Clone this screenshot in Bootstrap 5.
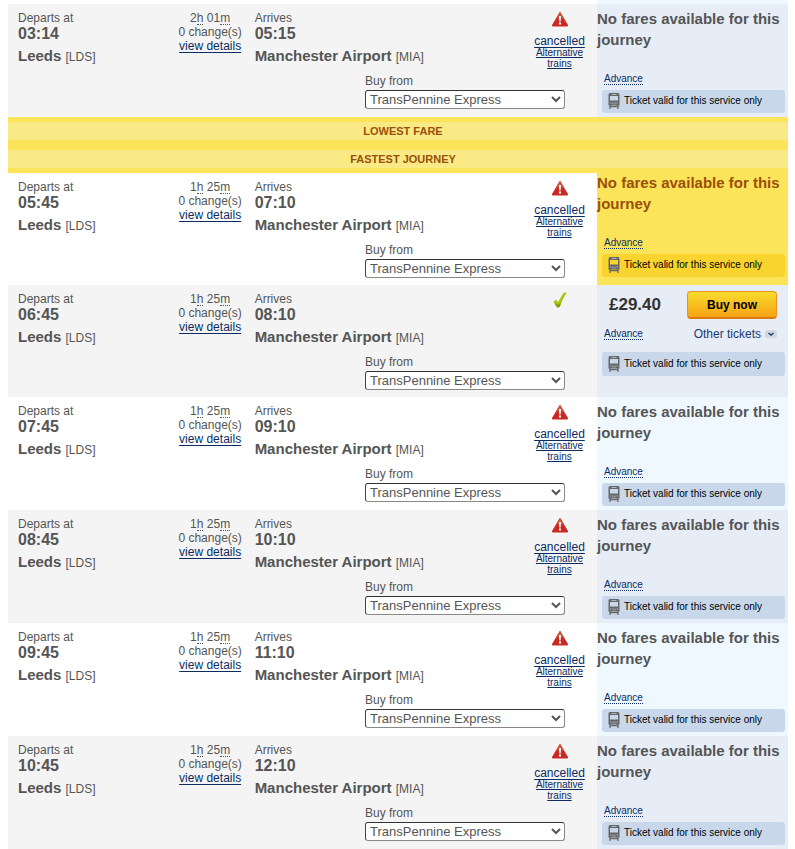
<!DOCTYPE html>
<html lang="en">
<head>
<meta charset="utf-8">
<meta name="viewport" content="width=device-width, initial-scale=1">
<title>Leeds to Manchester Airport</title>
<link href="https://cdn.jsdelivr.net/npm/bootstrap@5.3.0/dist/css/bootstrap.min.css" rel="stylesheet">
<style>
body { font: 12px/14px "Liberation Sans", Arial, sans-serif; color: #555; background: #fff; }
a { color: #0b2c63; text-decoration: underline; text-underline-offset: 2px; }
.results { padding: 0 7px 0 8px; }
.results::before { content: ""; display: block; height: 4px; width: 191px; margin-left: auto; background: #f0f8ff; }
.journey { display: grid; grid-template-columns: minmax(0, 3fr) 75px minmax(0, 5fr) 75px 191px; grid-template-rows: 69px auto; min-height: 113px; }
.journey.compact { min-height: 112px; }
.journey > div { padding-top: 7px; }
.shaded { background: #f4f4f4; }
.time { font-size: 16px; line-height: 18px; }
.station { font-size: 15px; line-height: 18px; margin-top: 4px; white-space: nowrap; }
.station span { font-size: 12px; }
.depart { padding-left: 10px; }
.arrive { padding-left: 7px; }
abbr[title] { text-decoration: none; border-bottom: 1px dotted #555; cursor: help; }
.duration abbr { display: inline-block; line-height: 12px; }
.state a { display: block; }
.state svg { display: block; margin: 0 auto 7px; }
.state .alt { font-size: 10px; line-height: 11px; margin-top: -1px; padding: 0 10px; text-underline-offset: 1px; }
.journey > .retailer { grid-column: 1 / 5; grid-row: 2; padding: 1px 0 0; justify-self: end; width: 200px; margin-right: 32px; }
.retailer label { display: block; line-height: 14px; margin-bottom: 2px; }
.retailer select { display: block; width: 100%; height: 19px; padding: 0; font-size: 13px; line-height: 17px; color: #555; background-color: #fff; border: 1px solid; border-color: #333 #888 #888 #444; border-radius: 3px; }
.journey > .fare { grid-column: 5; grid-row: 1 / 3; padding: 4px 3px 0 0; background: #f0f8ff; }
.shaded > .fare { background: #e6edf6; }
.fare h2 { font-size: 15px; line-height: 21px; font-weight: 700; margin: 0 0 23px; }
.advance { font-size: 10px; line-height: 11px; margin-left: 7px; align-self: start; color: #0b2c63; }
.fare .advance { border-bottom-color: #0b2c63; }
.valid { height: 23px; margin: 5px 0 0 5px; padding: 0 0 1px 6px; border-radius: 3px; background: #c8d8ea; color: #000; font-size: 10px; white-space: nowrap; gap: 4px; }
.journey.featured > .fare { background: #fbe45a; margin-top: -1px; padding-top: 0; color: #9c4f08; }
.featured .valid { background: #f9d42f; }
.banner { background: #fbe45a; padding: 5px 0; }
.banner span { display: block; background: #faea86; color: #9c4f08; font-size: 11px; line-height: 18px; font-weight: 700; padding-right: 10px; }
.banner span { padding: 0 0 0 10px; }
.price { font-size: 17px; line-height: 20px; color: #333; }
.buy { width: 90px; height: 28px; font-size: 12px; line-height: 14px; font-weight: 700; color: #000; border: 1px solid #e8941c; border-bottom: 2px solid #dc7a0e; border-radius: 4px; padding: 0; background: linear-gradient(#f8dc2c, #f6a214); }
.buy:hover { color: #000; background: #f8c420; }
.journey.bookable > .fare { padding-top: 6px; }
.bookable .valid { height: 24px; margin-top: 11px; }
.other { color: #1b3a72; text-decoration: none; gap: 4px; }
</style>
</head>
<body>
<svg class="d-none" aria-hidden="true">
  <symbol id="warn" viewBox="0 0 18 16"><path d="M9 .7 17 14q.4 1.4-.9 1.4H1.900Q.6 15.400 1 14Z" fill="#c92a24"/><path d="M9 .7 13 7.500H5Z" fill="#c95436"/><path d="M8 5h2l-.3 5.500H8.300Z" fill="#fff"/><rect x="8" y="11.500" width="2" height="2" fill="#fff"/></symbol>
  <symbol id="tick" viewBox="0 0 14 17"><path d="m.3 9.500 3-1.800 1.900 2.200Q8 4.500 10.800.8l3-.3Q9.200 7 7 14.500l-2.600 1.200Z" fill="#a4c814"/><path d="m1.200 11 3.600 1.800L7.500 11 7 14.500l-2.600 1.200Z" fill="#7d9f0b"/></symbol>
  <symbol id="train" viewBox="0 0 12 16"><path fill-rule="evenodd" d="M2 0h8q1.500 0 1.500 2v10.500H.5V2Q.5 0 2 0ZM2 3v4.500h8V3Z" fill="#666"/><path d="M3.500 1.500h5M2 10h1.500M8.500 10H10M5 9.500v2M7 9.500v2" stroke="#aab6c4" fill="none"/><path d="M2 12v4M10 12v4M2 13.700h8" stroke="#666" stroke-width="1.300" fill="none"/></symbol>
</svg>
<main class="results">

  <section class="journey shaded">
    <div class="depart">Departs at<div class="time fw-bold">03:14</div><div class="station"><b>Leeds</b> <span>[LDS]</span></div></div>
    <div class="duration text-center text-nowrap">2<abbr title="hours">h</abbr> 01<abbr title="minutes">m</abbr><br>0 change(s)<br><a href="#">view details</a></div>
    <div class="arrive">Arrives<div class="time fw-bold">05:15</div><div class="station"><b>Manchester Airport</b> <span>[MIA]</span></div></div>
    <div class="state text-center"><svg width="18" height="16"><use href="#warn"/></svg><a href="#">cancelled</a><a class="alt" href="#">Alternative trains</a></div>
    <div class="retailer"><label for="r1">Buy from</label><select id="r1"><option>TransPennine Express</option></select></div>
    <div class="fare d-flex flex-column"><h2>No fares available for this journey</h2><abbr class="advance" title="Advance ticket">Advance</abbr><div class="valid d-flex align-items-center"><svg width="12" height="16"><use href="#train"/></svg>Ticket valid for this service only</div></div>
  </section>

  <div class="banner text-center"><span>LOWEST FARE</span></div>
  <div class="banner text-center"><span>FASTEST JOURNEY</span></div>

  <section class="journey compact featured">
    <div class="depart">Departs at<div class="time fw-bold">05:45</div><div class="station"><b>Leeds</b> <span>[LDS]</span></div></div>
    <div class="duration text-center text-nowrap">1<abbr title="hours">h</abbr> 25<abbr title="minutes">m</abbr><br>0 change(s)<br><a href="#">view details</a></div>
    <div class="arrive">Arrives<div class="time fw-bold">07:10</div><div class="station"><b>Manchester Airport</b> <span>[MIA]</span></div></div>
    <div class="state text-center"><svg width="18" height="16"><use href="#warn"/></svg><a href="#">cancelled</a><a class="alt" href="#">Alternative trains</a></div>
    <div class="retailer"><label for="r2">Buy from</label><select id="r2"><option>TransPennine Express</option></select></div>
    <div class="fare d-flex flex-column"><h2>No fares available for this journey</h2><abbr class="advance" title="Advance ticket">Advance</abbr><div class="valid d-flex align-items-center"><svg width="12" height="16"><use href="#train"/></svg>Ticket valid for this service only</div></div>
  </section>

  <section class="journey compact bookable shaded">
    <div class="depart">Departs at<div class="time fw-bold">06:45</div><div class="station"><b>Leeds</b> <span>[LDS]</span></div></div>
    <div class="duration text-center text-nowrap">1<abbr title="hours">h</abbr> 25<abbr title="minutes">m</abbr><br>0 change(s)<br><a href="#">view details</a></div>
    <div class="arrive">Arrives<div class="time fw-bold">08:10</div><div class="station"><b>Manchester Airport</b> <span>[MIA]</span></div></div>
    <div class="state text-center"><svg width="14" height="17"><use href="#tick"/></svg></div>
    <div class="retailer"><label for="r3">Buy from</label><select id="r3"><option>TransPennine Express</option></select></div>
    <div class="fare">
      <div class="d-flex justify-content-between align-items-center ps-2 pe-2"><b class="price ms-1">£29.40</b><button type="button" class="btn buy">Buy now</button></div>
      <div class="d-flex justify-content-between align-items-center pe-2 mt-2"><abbr class="advance align-self-center" title="Advance ticket">Advance</abbr><a class="other d-flex align-items-center" href="#">Other tickets<svg width="12" height="8" viewBox="0 0 12 8"><rect width="12" height="8" rx="2" fill="#d3d7de"/><path d="m3.500 3 2.500 2 2.500-2" fill="none" stroke="#1b3a72" stroke-width="1.500"/></svg></a></div>
      <div class="valid d-flex align-items-center"><svg width="12" height="16"><use href="#train"/></svg>Ticket valid for this service only</div>
    </div>
  </section>

  <section class="journey">
    <div class="depart">Departs at<div class="time fw-bold">07:45</div><div class="station"><b>Leeds</b> <span>[LDS]</span></div></div>
    <div class="duration text-center text-nowrap">1<abbr title="hours">h</abbr> 25<abbr title="minutes">m</abbr><br>0 change(s)<br><a href="#">view details</a></div>
    <div class="arrive">Arrives<div class="time fw-bold">09:10</div><div class="station"><b>Manchester Airport</b> <span>[MIA]</span></div></div>
    <div class="state text-center"><svg width="18" height="16"><use href="#warn"/></svg><a href="#">cancelled</a><a class="alt" href="#">Alternative trains</a></div>
    <div class="retailer"><label for="r4">Buy from</label><select id="r4"><option>TransPennine Express</option></select></div>
    <div class="fare d-flex flex-column"><h2>No fares available for this journey</h2><abbr class="advance" title="Advance ticket">Advance</abbr><div class="valid d-flex align-items-center"><svg width="12" height="16"><use href="#train"/></svg>Ticket valid for this service only</div></div>
  </section>

  <section class="journey shaded">
    <div class="depart">Departs at<div class="time fw-bold">08:45</div><div class="station"><b>Leeds</b> <span>[LDS]</span></div></div>
    <div class="duration text-center text-nowrap">1<abbr title="hours">h</abbr> 25<abbr title="minutes">m</abbr><br>0 change(s)<br><a href="#">view details</a></div>
    <div class="arrive">Arrives<div class="time fw-bold">10:10</div><div class="station"><b>Manchester Airport</b> <span>[MIA]</span></div></div>
    <div class="state text-center"><svg width="18" height="16"><use href="#warn"/></svg><a href="#">cancelled</a><a class="alt" href="#">Alternative trains</a></div>
    <div class="retailer"><label for="r5">Buy from</label><select id="r5"><option>TransPennine Express</option></select></div>
    <div class="fare d-flex flex-column"><h2>No fares available for this journey</h2><abbr class="advance" title="Advance ticket">Advance</abbr><div class="valid d-flex align-items-center"><svg width="12" height="16"><use href="#train"/></svg>Ticket valid for this service only</div></div>
  </section>

  <section class="journey">
    <div class="depart">Departs at<div class="time fw-bold">09:45</div><div class="station"><b>Leeds</b> <span>[LDS]</span></div></div>
    <div class="duration text-center text-nowrap">1<abbr title="hours">h</abbr> 25<abbr title="minutes">m</abbr><br>0 change(s)<br><a href="#">view details</a></div>
    <div class="arrive">Arrives<div class="time fw-bold">11:10</div><div class="station"><b>Manchester Airport</b> <span>[MIA]</span></div></div>
    <div class="state text-center"><svg width="18" height="16"><use href="#warn"/></svg><a href="#">cancelled</a><a class="alt" href="#">Alternative trains</a></div>
    <div class="retailer"><label for="r6">Buy from</label><select id="r6"><option>TransPennine Express</option></select></div>
    <div class="fare d-flex flex-column"><h2>No fares available for this journey</h2><abbr class="advance" title="Advance ticket">Advance</abbr><div class="valid d-flex align-items-center"><svg width="12" height="16"><use href="#train"/></svg>Ticket valid for this service only</div></div>
  </section>

  <section class="journey shaded">
    <div class="depart">Departs at<div class="time fw-bold">10:45</div><div class="station"><b>Leeds</b> <span>[LDS]</span></div></div>
    <div class="duration text-center text-nowrap">1<abbr title="hours">h</abbr> 25<abbr title="minutes">m</abbr><br>0 change(s)<br><a href="#">view details</a></div>
    <div class="arrive">Arrives<div class="time fw-bold">12:10</div><div class="station"><b>Manchester Airport</b> <span>[MIA]</span></div></div>
    <div class="state text-center"><svg width="18" height="16"><use href="#warn"/></svg><a href="#">cancelled</a><a class="alt" href="#">Alternative trains</a></div>
    <div class="retailer"><label for="r7">Buy from</label><select id="r7"><option>TransPennine Express</option></select></div>
    <div class="fare d-flex flex-column"><h2>No fares available for this journey</h2><abbr class="advance" title="Advance ticket">Advance</abbr><div class="valid d-flex align-items-center"><svg width="12" height="16"><use href="#train"/></svg>Ticket valid for this service only</div></div>
  </section>

</main>
<script src="https://cdn.jsdelivr.net/npm/bootstrap@5.3.0/dist/js/bootstrap.bundle.min.js"></script>
</body>
</html>
